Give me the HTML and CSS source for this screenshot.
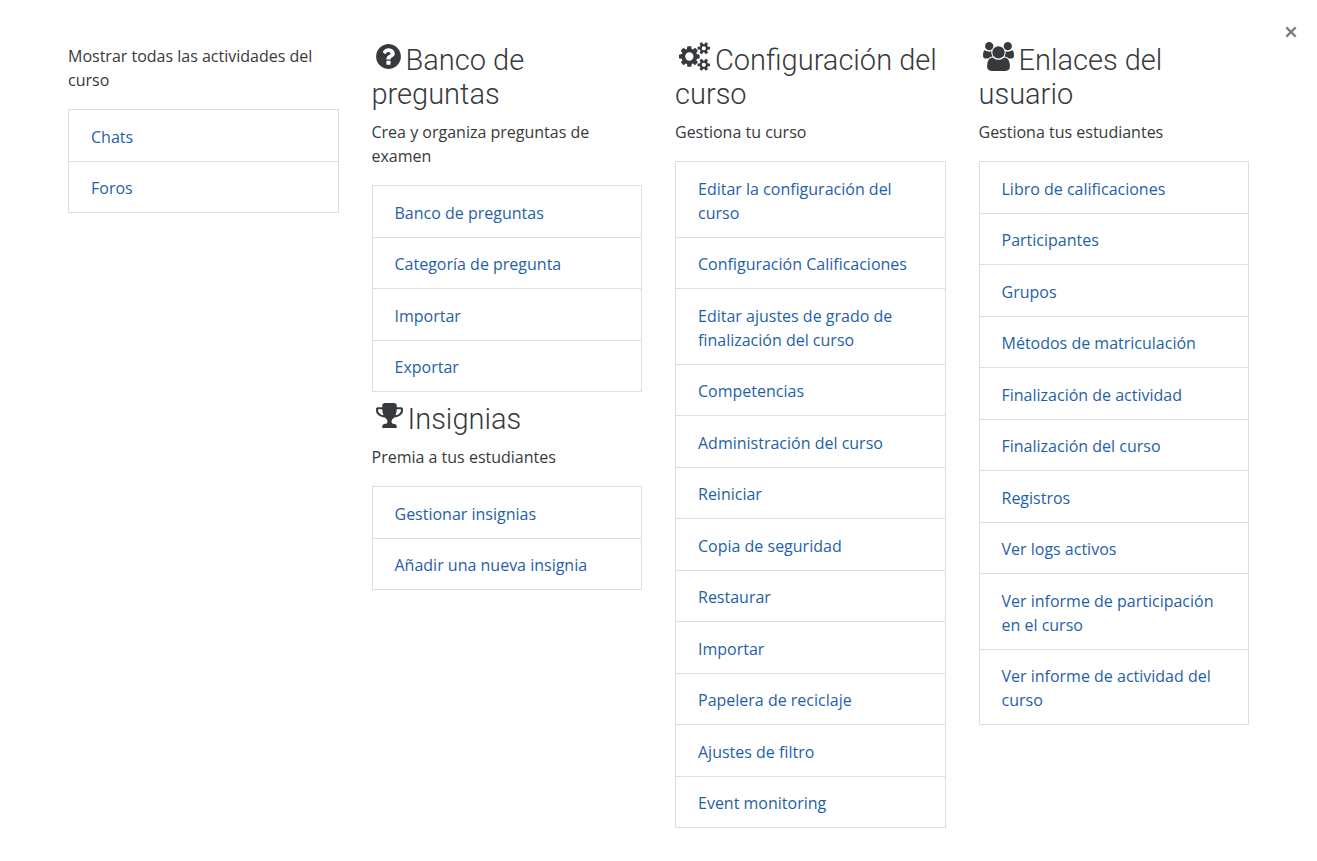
FILE: index.html
```html
<!DOCTYPE html>
<html lang="es">
<head>
<meta charset="utf-8">
<title>Panel del curso</title>
<meta name="viewport" content="width=device-width, initial-scale=1">
<link rel="stylesheet" href="styles.css">
</head>
<body>
<main class="panel">
  <button class="close" type="button" aria-label="Cerrar">
    <svg viewBox="0 0 12 12" aria-hidden="true"><path d="M2 2l8 8M10 2l-8 8"/></svg>
  </button>
  <div class="column">
    <section>
      <p class="lead">Mostrar todas las actividades del curso</p>
      <ul class="links">
        <li><a href="#">Chats</a></li>
        <li><a href="#">Foros</a></li>
      </ul>
    </section>
  </div>
  <div class="column">
    <section>
      <h2><svg class="icon icon-question" viewBox="128 0 1536 1792" aria-hidden="true"><path d="M1024 1376v-192q0-14-9-23t-23-9h-192q-14 0-23 9t-9 23v192q0 14 9 23t23 9h192q14 0 23-9t9-23zm256-672q0-88-55.500-163t-138.500-116-170-41q-243 0-371 213-15 24 8 42l132 100q7 6 19 6 16 0 25-12 53-68 86-92 34-24 86-24 48 0 85.500 26t37.500 59q0 38-20 61t-68 45q-63 28-115.500 86.500t-52.500 125.500v36q0 14 9 23t23 9h192q14 0 23-9t9-23q0-19 21.500-49.500t54.500-49.500q32-18 49-28.500t46-35 44.500-48 28-60.500 12.500-81zm384 192q0 209-103 385.500t-279.500 279.500-385.500 103-385.500-103-279.500-279.500-103-385.500 103-385.500 279.500-279.500 385.500-103 385.500 103 279.500 279.500 103 385.500z"/></svg>Banco de preguntas</h2>
      <p class="lead">Crea y organiza preguntas de examen</p>
      <ul class="links">
        <li><a href="#">Banco de preguntas</a></li>
        <li><a href="#">Categoría de pregunta</a></li>
        <li><a href="#">Importar</a></li>
        <li><a href="#">Exportar</a></li>
      </ul>
    </section>
    <section>
      <h2><svg class="icon icon-trophy" viewBox="64 0 1664 1792" aria-hidden="true"><path d="M522 883q-74-162-74-371h-256v96q0 78 94.500 162t235.500 113zm1078-275v-96h-256q0 209-74 371 141-29 235.500-113t94.500-162zm128-128v128q0 71-41.500 143t-112 130-173 97.500-215.500 44.500q-42 54-95 95-38 34-52.500 72.500t-14.500 89.500q0 54 30.500 91t97.500 37q75 0 133.500 45.500t58.500 114.500v64q0 14-9 23t-23 9h-832q-14 0-23-9t-9-23v-64q0-69 58.500-114.500t133.500-45.500q67 0 97.500-37t30.500-91q0-51-14.500-89.500t-52.500-72.500q-53-41-95-95-113-5-215.500-44.500t-173-97.500-112-130-41.500-143v-128q0-40 28-68t68-28h288v-96q0-66 47-113t113-47h576q66 0 113 47t47 113v96h288q40 0 68 28t28 68z"/></svg>Insignias</h2>
      <p class="lead">Premia a tus estudiantes</p>
      <ul class="links">
        <li><a href="#">Gestionar insignias</a></li>
        <li><a href="#">Añadir una nueva insignia</a></li>
      </ul>
    </section>
  </div>
  <div class="column">
    <section>
      <h2><svg class="icon icon-wide" viewBox="-64 0 1920 1792" aria-hidden="true"><path d="M832 896q0-106-75-181t-181-75-181 75-75 181 75 181 181 75 181-75 75-181zm768 512q0-52-38-90t-90-38-90 38-38 90q0 53 37.500 90.500t90.500 37.500 90.500-37.500 37.500-90.500zm0-1024q0-52-38-90t-90-38-90 38-38 90q0 53 37.500 90.500t90.500 37.500 90.500-37.500 37.500-90.500zm-384 421v185q0 10-7 19.500t-16 10.500l-155 24q-11 35-32 76 34 48 90 115 7 11 7 20 0 12-7 19-23 30-82.500 89.500t-78.500 59.500q-11 0-21-7l-115-90q-37 19-77 31-11 108-23 155-7 24-30 24h-186q-11 0-20-7.500t-10-17.500l-23-153q-34-10-75-31l-118 89q-7 7-20 7-11 0-21-8-144-133-144-160 0-9 7-19 10-14 41-53t47-61q-23-44-35-82l-152-24q-10-1-17-9.500t-7-19.500v-185q0-10 7-19.500t16-10.500l155-24q11-35 32-76-34-48-90-115-7-11-7-20 0-12 7-20 22-30 82-89t79-59q11 0 21 7l115 90q34-18 77-32 11-108 23-154 7-24 30-24h186q11 0 20 7.500t10 17.500l23 153q34 10 75 31l118-89q8-7 20-7 11 0 21 8 144 133 144 160 0 8-7 19-12 16-42 54t-45 60q23 48 34 82l152 23q10 2 17 10.500t7 19.500zm640 533v140q0 16-149 31-12 27-30 52 51 113 51 138 0 4-4 7-122 71-124 71-8 0-46-47t-52-68q-20 2-30 2t-30-2q-14 21-52 68t-46 47q-2 0-124-71-4-3-4-7 0-25 51-138-18-25-30-52-149-15-149-31v-140q0-16 149-31 13-29 30-52-51-113-51-138 0-4 4-7 4-2 35-20t59-34 30-16q8 0 46 46.500t52 67.500q20-2 30-2t30 2q51-71 92-112l6-2q4 0 124 70 4 3 4 7 0 25-51 138 17 23 30 52 149 15 149 31zm0-1024v140q0 16-149 31-12 27-30 52 51 113 51 138 0 4-4 7-122 71-124 71-8 0-46-47t-52-68q-20 2-30 2t-30-2q-14 21-52 68t-46 47q-2 0-124-71-4-3-4-7 0-25 51-138-18-25-30-52-149-15-149-31v-140q0-16 149-31 13-29 30-52-51-113-51-138 0-4 4-7 4-2 35-20t59-34 30-16q8 0 46 46.500t52 67.500q20-2 30-2t30 2q51-71 92-112l6-2q4 0 124 70 4 3 4 7 0 25-51 138 17 23 30 52 149 15 149 31z"/></svg>Configuración del curso</h2>
      <p class="lead">Gestiona tu curso</p>
      <ul class="links">
        <li><a href="#">Editar la configuración del curso</a></li>
        <li><a href="#">Configuración Calificaciones</a></li>
        <li><a href="#">Editar ajustes de grado de finalización del curso</a></li>
        <li><a href="#">Competencias</a></li>
        <li><a href="#">Administración del curso</a></li>
        <li><a href="#">Reiniciar</a></li>
        <li><a href="#">Copia de seguridad</a></li>
        <li><a href="#">Restaurar</a></li>
        <li><a href="#">Importar</a></li>
        <li><a href="#">Papelera de reciclaje</a></li>
        <li><a href="#">Ajustes de filtro</a></li>
        <li><a href="#">Event monitoring</a></li>
      </ul>
    </section>
  </div>
  <div class="column">
    <section>
      <h2><svg class="icon icon-wide" viewBox="-64 0 1920 1792" aria-hidden="true"><path d="M529 896q-162 5-265 128h-134q-82 0-138-40.500t-56-118.500q0-353 124-353 6 0 43.500 21t97.500 42.500 119 21.500q67 0 133-23-5 37-5 66 0 139 81 256zm1071 637q0 120-73 189.500t-194 69.500h-874q-121 0-194-69.500t-73-189.500q0-53 3.500-103.500t14-109 26.500-108.500 43-97.500 62-81 85.500-53.500 111.500-20q10 0 43 21.500t73 48 107 48 135 21.500 135-21.500 107-48 73-48 43-21.500q61 0 111.500 20t85.500 53.500 62 81 43 97.500 26.500 108.500 14 109 3.500 103.500zm-1024-1277q0 106-75 181t-181 75-181-75-75-181 75-181 181-75 181 75 75 181zm704 384q0 159-112.500 271.500t-271.500 112.500-271.500-112.500-112.500-271.500 112.500-271.500 271.500-112.500 271.500 112.500 112.500 271.500zm576 225q0 78-56 118.500t-138 40.500h-134q-103-123-265-128 81-117 81-256 0-29-5-66 66 23 133 23 59 0 119-21.500t97.500-42.500 43.500-21q124 0 124 353zm-128-609q0 106-75 181t-181 75-181-75-75-181 75-181 181-75 181 75 75 181z"/></svg>Enlaces del usuario</h2>
      <p class="lead">Gestiona tus estudiantes</p>
      <ul class="links">
        <li><a href="#">Libro de calificaciones</a></li>
        <li><a href="#">Participantes</a></li>
        <li><a href="#">Grupos</a></li>
        <li><a href="#">Métodos de matriculación</a></li>
        <li><a href="#">Finalización de actividad</a></li>
        <li><a href="#">Finalización del curso</a></li>
        <li><a href="#">Registros</a></li>
        <li><a href="#">Ver logs activos</a></li>
        <li><a href="#">Ver informe de participación en el curso</a></li>
        <li><a href="#">Ver informe de actividad del curso</a></li>
      </ul>
    </section>
  </div>
</main>
</body>
</html>
```

FILE: styles.css
```css
* {
  box-sizing: border-box;
}

body {
  margin: 0;
  background: #fff;
  color: #373a3c;
  font-family: "Segoe UI", "Open Sans", "Noto Sans", sans-serif;
  font-size: 16px;
  line-height: 24px;
}

.panel {
  position: relative;
  display: grid;
  grid-template-columns: repeat(4, minmax(0, 1fr));
  gap: 33px;
  padding: 43px 68px 33px;
}

.close {
  position: absolute;
  top: 22px;
  right: 16px;
  display: grid;
  place-items: center;
  width: 20px;
  height: 20px;
  padding: 0;
  border: 0;
  background: none;
  cursor: pointer;
}

.close svg {
  width: 14px;
  height: 14px;
  fill: none;
  stroke: #7f7f7f;
  stroke-width: 2;
}

h2 {
  margin: 0 0 8px;
  font-family: Roboto, sans-serif;
  font-size: 29px;
  font-weight: 300;
  line-height: 34px;
}

.icon {
  height: 29px;
  margin: -4px 5px -1px 4px;
  fill: currentColor;
}

.icon-question {
  width: 25px;
}

.icon-trophy {
  width: 27px;
}

.icon-wide {
  width: 31px;
}

.lead {
  margin: 0;
  padding: 1px 0 17px;
}

.column section + section {
  margin-top: 10px;
}

.links {
  margin: 0;
  padding: 0;
  border: 1px solid #dedede;
  border-top: 0;
  list-style: none;
}

.links li {
  padding: 14px 22px 12px;
  border-top: 1px solid #dedede;
}

.links li:nth-child(odd) {
  padding-top: 15px;
}

.links a {
  color: #1f5fa8;
  text-decoration: none;
}
```
